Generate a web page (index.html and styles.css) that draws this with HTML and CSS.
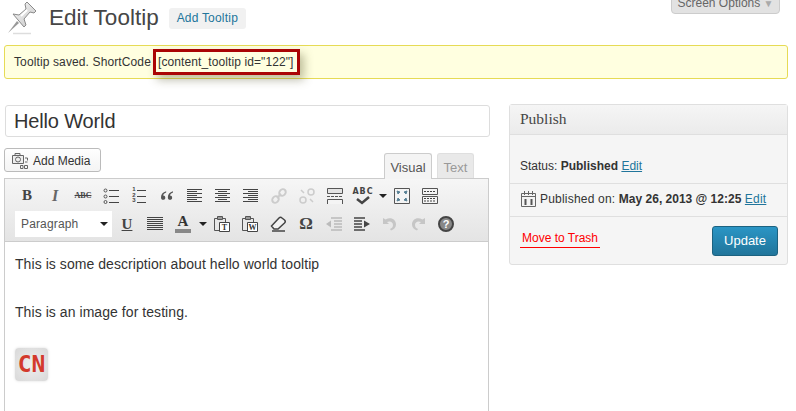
FILE: index.html
```html
<!DOCTYPE html>
<html>
  <head>
    <title>Edit Tooltip</title>
    <link rel="stylesheet" href="styles.css">
  </head>
  <body>
    <svg class="hidden_defs" width="0" height="0">
      <defs>
        <linearGradient id="pin_fill" x1="0" y1="0" x2="1" y2="1">
          <stop offset="0" stop-color="#fafafa"/>
          <stop offset="1" stop-color="#c4c4c4"/>
        </linearGradient>
        <symbol id="lines_left" viewBox="0 0 16 16"><path d="M0 1.500h15M0 3.500h10M0 5.500h15M0 7.500h10M0 9.500h15M0 11.500h10M0 13.500h15" stroke="currentColor" fill="none"/></symbol>
        <symbol id="lines_center" viewBox="0 0 16 16"><path d="M0 1.500h15M3 3.500h9M0 5.500h15M3 7.500h9M0 9.500h15M3 11.500h9M0 13.500h15" stroke="currentColor" fill="none"/></symbol>
        <symbol id="lines_right" viewBox="0 0 16 16"><path d="M0 1.500h15M5 3.500h10M0 5.500h15M5 7.500h10M0 9.500h15M5 11.500h10M0 13.500h15" stroke="currentColor" fill="none"/></symbol>
        <symbol id="lines_full" viewBox="0 0 16 16"><path d="M0 1.500h16M0 3.500h16M0 5.500h16M0 7.500h16M0 9.500h16M0 11.500h16M0 13.500h16" stroke="currentColor" fill="none"/></symbol>
        <symbol id="clipboard" viewBox="0 0 16 16"><path d="M.5 2.500h11v12H.5z" fill="#e8e8e8" stroke="#555"/><path d="M3.500 .5h5v3h-5z" fill="#999" stroke="#555"/></symbol>
      </defs>
    </svg>

    <button class="screen_options">Screen Options <span class="screen_arrow">&#9660;</span></button>

    <div class="page_head">
      <svg class="pin_icon" width="32" height="34" viewBox="0 0 32 34">
        <path d="M6 31.500h18" stroke="#ddd" stroke-width="1.500"/>
        <path d="M1 31 L10 19 L12 21 Z" fill="#999"/>
        <path d="M6 12 L12 13 L19 7 L18 2 L20 0 L29 9 L27 11 L23 10 L17 17 L19 23 L17 25 Z" fill="url(#pin_fill)" stroke="#8a8a8a"/>
        <path d="M14 14 L20 8" stroke="#fff" stroke-width="2"/>
      </svg>
      <h2 class="page_title">Edit Tooltip</h2>
      <a class="add_new" href="#">Add Tooltip</a>
    </div>

    <div class="notice">
      <span class="notice_text">Tooltip saved. ShortCode</span>
      <span class="shortcode">[content_tooltip id="122"]</span>
    </div>

    <div class="columns">
      <div class="main_col">
        <input class="title_input" type="text" value="Hello World">

        <div class="editor_top">
          <button class="media_btn">
            <svg width="16" height="16" viewBox="0 0 16 16">
              <path d="M.5 2.500h11v8H.5z M3 2.500v-2h5v2" fill="#eee" stroke="#666"/>
              <circle cx="6" cy="6.500" r="2.500" fill="none" stroke="#666"/>
              <path d="M13 5h2.500v2.500M13 9h2.500M8.500 12.500h2.500v3H8.500zM12.500 12.500h3v3h-3z" fill="none" stroke="#666"/>
            </svg>
            Add Media
          </button>
          <div class="tabs">
            <a class="tab tab_active" href="#">Visual</a>
            <a class="tab" href="#">Text</a>
          </div>
        </div>

        <div class="editor">
          <div class="toolbar">
            <div class="tool_row">
              <span class="tool tool_b">B</span>
              <span class="tool tool_i">I</span>
              <span class="tool tool_abc">ABC</span>
              <span class="tool">
                <svg width="16" height="16" viewBox="0 0 16 16"><path d="M6 2.500h10M6 8.500h10M6 14.500h10" stroke="#444" fill="none"/><circle cx="2.500" cy="2.500" r="1.500" fill="none" stroke="#555"/><circle cx="2.500" cy="8.500" r="1.500" fill="none" stroke="#555"/><circle cx="2.500" cy="14" r="1.500" fill="none" stroke="#555"/></svg>
              </span>
              <span class="tool tool_ol">
                <span class="ol_nums">1<br>2<br>3</span>
                <svg width="9" height="16" viewBox="0 0 9 16"><path d="M0 2.500h9M0 8.500h9M0 14.500h9" stroke="#444" fill="none"/></svg>
              </span>
              <span class="tool">
                <svg width="12" height="9" viewBox="0 0 14 10"><path d="M6 0C2 1 0 4 0 7c0 2 1 3 2.500 3S5 9 5 7.500 4 5 2.500 5C3 3 4.500 2 6 1.500zM14 0c-4 1-6 4-6 7 0 2 1 3 2.500 3S13 9 13 7.500 12 5 10.500 5c.5-2 2-3 3.500-3.500z" fill="#555"/></svg>
              </span>
              <span class="tool"><svg class="tool_lines" width="16" height="16"><use href="#lines_left"/></svg></span>
              <span class="tool"><svg class="tool_lines" width="16" height="16"><use href="#lines_center"/></svg></span>
              <span class="tool"><svg class="tool_lines" width="16" height="16"><use href="#lines_right"/></svg></span>
              <span class="tool">
                <svg width="16" height="16" viewBox="0 0 16 16"><g fill="none" stroke="#ccc" stroke-width="2"><ellipse cx="11.500" cy="4.500" rx="3" ry="3.500" transform="rotate(45 11.500 4.500)"/><ellipse cx="4.500" cy="11.500" rx="3" ry="3.500" transform="rotate(45 4.500 11.500)"/><path d="M6 10l4-4"/></g></svg>
              </span>
              <span class="tool">
                <svg width="16" height="16" viewBox="0 0 16 16"><g fill="none" stroke="#ccc" stroke-width="1.500"><circle cx="12" cy="4" r="3"/><circle cx="4" cy="12" r="3"/><path d="M2 2l3 3M11 11l3 3"/></g></svg>
              </span>
              <span class="tool">
                <svg width="16" height="16" viewBox="0 0 16 16"><path d="M.5 .5h15v5H.5z" fill="#e4e4e4" stroke="#555"/><path d="M0 8.500h16" stroke="#555" stroke-dasharray="3 1"/><path d="M.5 16v-4.500h15V16" fill="#f4f4f4" stroke="#555"/></svg>
              </span>
              <span class="tool tool_spell">
                <span class="spell_text">ABC</span>
                <svg width="14" height="9" viewBox="0 0 14 9"><path d="M1 3l5 4 7-6" fill="none" stroke="#444" stroke-width="2.500"/></svg>
              </span>
              <span class="tool_arrow"></span>
              <span class="tool">
                <svg width="16" height="16" viewBox="0 0 16 16"><path d="M.5 .5h15v15H.5z" fill="#f4f4f4" stroke="#555"/><path d="M3 3l3 1-2 2zM13 3l-3 1 2 2zM3 13l3-1-2-2zM13 13l-3-1 2-2z" fill="#5a8296" stroke="#5a8296"/></svg>
              </span>
              <span class="tool">
                <svg width="16" height="16" viewBox="0 0 16 16"><path d="M.5 .5h15v6H.5zM.5 8.500h15v7H.5z" fill="#f4f4f4" stroke="#555"/><path d="M2 3.500h12M2 10.500h12M2 13h12" stroke="#444" stroke-dasharray="2 1"/></svg>
              </span>
            </div>
            <div class="tool_row">
              <div class="format_select">Paragraph<span class="select_arrow"></span></div>
              <span class="tool tool_u">U</span>
              <span class="tool"><svg class="tool_lines" width="16" height="16"><use href="#lines_full"/></svg></span>
              <span class="tool tool_color">A<span class="color_bar"></span></span>
              <span class="tool_arrow"></span>
              <span class="tool">
                <svg width="16" height="16" viewBox="0 0 16 16">
                  <use href="#clipboard" width="16" height="16"/>
                  <path d="M5.500 6.500h10v9h-10z" fill="#fff" stroke="#444"/>
                  <text class="paste_letter" x="10.500" y="14">T</text>
                </svg>
              </span>
              <span class="tool">
                <svg width="16" height="16" viewBox="0 0 16 16">
                  <use href="#clipboard" width="16" height="16"/>
                  <path d="M5.500 6.500h10v9h-10z" fill="#fff" stroke="#444"/>
                  <text class="paste_letter" x="10.500" y="14">W</text>
                </svg>
              </span>
              <span class="tool">
                <svg width="16" height="16" viewBox="0 0 16 16"><path d="M1.500 10L9 2c1-1 2-1 3 0l2.500 2c1 1 1 2 0 3L8 13H4z" fill="#f2f2f2" stroke="#444" stroke-width="1.500"/><path d="M2 15h13" stroke="#444" stroke-width="1.500"/></svg>
              </span>
              <span class="tool tool_omega">&#937;</span>
              <span class="tool">
                <svg width="16" height="15" viewBox="0 0 16 15"><path d="M5 1h11M8 4h8M8 7h8M8 10h8M5 13h11" stroke="#bbb" stroke-width="1.500" fill="none"/><path d="M0 7l5-3.500v7z" fill="#bbb"/></svg>
              </span>
              <span class="tool">
                <svg width="16" height="15" viewBox="0 0 16 15"><path d="M0 1h11M0 4h8M0 7h8M0 10h8M0 13h11" stroke="#444" stroke-width="1.500" fill="none"/><path d="M16 7l-6-3.500v7z" fill="#444"/></svg>
              </span>
              <span class="tool">
                <svg width="14" height="14" viewBox="0 0 14 14"><path d="M0 1v6h6L4 5c3-1.500 6 0 6 3 0 2-1 3-3 4l1 1.500c3-1 5-3 5-6 0-5-5-8-10.500-5z" fill="#c6c6c6"/></svg>
              </span>
              <span class="tool">
                <svg width="14" height="14" viewBox="0 0 14 14"><path d="M14 1v6H8l2-2C7 3.500 4 5 4 8c0 2 1 3 3 4l-1 1.500c-3-1-5-3-5-6 0-5 5-8 10.500-5z" fill="#c6c6c6"/></svg>
              </span>
              <span class="tool tool_help">?</span>
            </div>
          </div>
          <div class="editor_body">
            <p>This is some description about hello world tooltip</p>
            <p>This is an image for testing.</p>
            <div class="cn_logo">CN</div>
          </div>
        </div>
      </div>

      <div class="side_box">
        <h3 class="side_title">Publish</h3>
        <div class="status_row">Status: <b>Published</b> <a href="#">Edit</a></div>
        <div class="date_row">
          <svg width="15" height="16" viewBox="0 0 15 16">
            <path d="M.5 2.500h14v13H.5z" fill="#f4f4f4" stroke="#666"/>
            <path d="M3.500 0v4M7.500 0v4M11.500 0v4M1 5.500h13" stroke="#666" fill="none"/>
            <path d="M4.500 8v6M10.500 8v6" stroke="#555" stroke-width="2" fill="none"/>
          </svg>
          <span class="date_text">Published on: <b>May 26, 2013 @ 12:25</b> <a href="#">Edit</a></span>
        </div>
        <div class="action_row">
          <a class="trash_link" href="#">Move to Trash</a>
          <button class="update_btn">Update</button>
        </div>
      </div>
    </div>
  </body>
</html>
```

FILE: styles.css
```css
body{
  margin:0;
  height:411px;
  overflow:hidden;
  background:#fff;
  color:#333;
  font-family:"Liberation Sans",sans-serif;
  font-size:12px;
}
a{
  color:#21759b;
}
.hidden_defs{
  position:absolute;
}
.screen_options{
  position:absolute;
  top:-9px;
  left:671px;
  width:109px;
  height:23px;
  padding:0;
  border:1px solid #ccc;
  border-radius:0 0 4px 4px;
  background:#e2e2e2;
  color:#666;
  font:12px "Liberation Sans",sans-serif;
}
.screen_arrow{
  color:#aaa;
  font-size:10px;
}
.page_head{
  display:flex;
  align-items:flex-start;
  height:45px;
  padding-left:7px;
}
.pin_icon{
  margin-top:2px;
}
.page_title{
  margin:0 0 0 10px;
  padding-top:3px;
  color:#464646;
  font-size:22.500px;
  font-weight:normal;
  line-height:30px;
}
.add_new{
  margin:8px 0 0 10px;
  padding:0 8px;
  height:21px;
  border-radius:3px;
  background:#f1f1f1;
  font-size:12px;
  letter-spacing:.2px;
  line-height:21px;
  text-decoration:none;
}
.notice{
  display:flex;
  align-items:center;
  box-sizing:border-box;
  width:784px;
  height:34px;
  margin-left:4px;
  padding-left:9px;
  border:1px solid #e6db55;
  border-radius:3px;
  background:#ffffe0;
  font-size:12px;
}
.notice_text{
  width:139px;
  letter-spacing:.12px;
}
.shortcode{
  box-sizing:border-box;
  width:147px;
  height:26px;
  padding-left:2px;
  border:3px solid #aa0505;
  letter-spacing:.1px;
  line-height:20px;
  box-shadow:4px 5px 10px rgba(90,90,50,.4);
}
.columns{
  display:flex;
  align-items:flex-start;
  margin-top:25px;
  padding-left:4px;
}
.main_col{
  width:486px;
  padding-top:1px;
}
.title_input{
  display:block;
  box-sizing:border-box;
  width:485px;
  height:32px;
  margin-left:1px;
  padding:0 8px;
  border:1px solid #ddd;
  border-radius:3px;
  color:#333;
  font:20px "Liberation Sans",sans-serif;
  letter-spacing:-.15px;
  outline:none;
}
.editor_top{
  display:flex;
  justify-content:space-between;
  align-items:flex-start;
  margin-top:11px;
  height:30px;
}
.media_btn{
  display:flex;
  align-items:center;
  gap:5px;
  box-sizing:border-box;
  width:97px;
  height:24px;
  padding:1px 0 0 7px;
  border:1px solid #bbb;
  border-radius:3px;
  background:linear-gradient(#fefefe,#f4f4f4);
  color:#333;
  font:12px "Liberation Sans",sans-serif;
}
.tabs{
  display:flex;
  gap:5px;
  margin:5px 16px 0 0;
}
.tab{
  box-sizing:border-box;
  width:37px;
  height:25px;
  border:1px solid #dfdfdf;
  border-bottom:none;
  border-radius:3px 3px 0 0;
  background:#e9e9e9;
  color:#999;
  font-size:13px;
  line-height:27px;
  text-align:center;
  text-decoration:none;
}
.tab_active{
  position:relative;
  z-index:1;
  height:26px;
  width:48px;
  border-color:#ccc;
  background:#f4f4f4;
  color:#555;
}
.editor{
  box-sizing:border-box;
  width:485px;
  height:233px;
  border:1px solid #ccc;
  border-bottom:none;
  overflow:hidden;
}
.toolbar{
  box-sizing:border-box;
  height:63px;
  padding:2px 0 0 8px;
  border-bottom:1px solid #ccc;
  background:linear-gradient(#f6f6f6,#e4e4e4);
}
.tool_row{
  display:flex;
  align-items:center;
  height:29px;
}
.tool_row + .tool_row{
  height:28px;
}
.tool{
  display:flex;
  justify-content:center;
  align-items:center;
  flex:none;
  width:28px;
  height:24px;
  color:#444;
}
.tool_b{
  font:bold 15px "Liberation Serif",serif;
}
.tool_i{
  color:#666;
  font:italic bold 16px "Liberation Serif",serif;
}
.tool_abc{
  font:bold 8px "Liberation Serif",serif;
  text-decoration:line-through;
}
.tool_ol{
  gap:1px;
}
.ol_nums{
  font:bold 6px/5.500px "Liberation Sans",sans-serif;
}
.tool_lines{
  color:#444;
}
.tool_spell{
  flex-direction:column;
}
.spell_text{
  font:bold 8px/9px "DejaVu Sans",sans-serif;
  letter-spacing:1px;
}
.tool_arrow{
  display:flex;
  flex:none;
  justify-content:center;
  align-items:center;
  width:11px;
}
.tool_arrow::before{
  content:"";
  border:4px solid transparent;
  border-top:4px solid #222;
  border-bottom:none;
}
.format_select{
  position:relative;
  box-sizing:border-box;
  flex:none;
  width:97px;
  height:26px;
  margin:0 1px 0 2px;
  padding-left:6px;
  background:#fff;
  color:#555;
  font-size:12px;
  letter-spacing:.15px;
  line-height:26px;
}
.select_arrow{
  position:absolute;
  top:11px;
  right:4px;
  border:4px solid transparent;
  border-top:4px solid #222;
  border-bottom:none;
}
.tool_u{
  font:bold 15px "Liberation Serif",serif;
  text-decoration:underline;
}
.tool_color{
  position:relative;
  align-items:flex-start;
  color:#333;
  font:bold 15px/18px "Liberation Serif",serif;
}
.color_bar{
  position:absolute;
  left:6px;
  bottom:3px;
  width:16px;
  height:4px;
  background:#888;
}
.paste_letter{
  fill:#333;
  font:bold 8px "Liberation Serif",serif;
  text-anchor:middle;
}
.tool_omega{
  font:bold 17px "Liberation Serif",serif;
}
.tool_help{
  box-sizing:border-box;
  width:16px;
  height:16px;
  margin:0 6px;
  border:2px solid #444;
  border-radius:50%;
  background:#888;
  color:#fff;
  font:bold 11px "Liberation Sans",sans-serif;
}
.editor_body{
  padding:10px 0 0 10px;
  color:#333;
  font-size:14px;
  letter-spacing:.06px;
  line-height:24px;
}
.editor_body p{
  margin:0 0 24px;
}
.cn_logo{
  width:33px;
  height:33px;
  margin-top:24px;
  border-radius:4px;
  background:radial-gradient(#efefef,#d8d8d8);
  box-shadow:0 0 3px #ddd;
  color:#d33a2c;
  font:bold 23px/33px "DejaVu Sans Mono",monospace;
  letter-spacing:0;
  text-align:center;
}
.side_box{
  box-sizing:border-box;
  width:279px;
  height:161px;
  margin-left:19px;
  border:1px solid #dfdfdf;
  border-radius:3px;
  background:#f5f5f5;
}
.side_title{
  height:29px;
  margin:0;
  padding-left:10px;
  border-bottom:1px solid #dfdfdf;
  background:linear-gradient(#f5f5f5,#ebebeb);
  color:#464646;
  font:15.500px/28px "Liberation Serif",serif;
  font-weight:normal;
}
.status_row{
  box-sizing:border-box;
  height:49px;
  padding:23px 0 0 10px;
  border-bottom:1px solid #dfdfdf;
  font-size:12px;
  line-height:17px;
}
.date_row{
  display:flex;
  align-items:center;
  gap:4px;
  box-sizing:border-box;
  height:33px;
  padding:0 0 3px 11px;
  border-bottom:1px solid #dfdfdf;
}
.date_text{
  letter-spacing:.2px;
}
.date_text b{
  letter-spacing:0;
}
.action_row{
  display:flex;
  justify-content:space-between;
  padding:9px 9px 0 10px;
}
.trash_link{
  align-self:flex-start;
  margin-top:4px;
  padding:0 2px;
  border-bottom:1px solid #f00;
  color:#f00;
  text-decoration:none;
  line-height:17px;
}
.update_btn{
  width:66px;
  height:30px;
  padding:0 0 2px;
  border:1px solid #1c6280;
  border-radius:3px;
  background:linear-gradient(#2a95c5,#21759b);
  color:#fff;
  font:13px "Liberation Sans",sans-serif;
}
```
